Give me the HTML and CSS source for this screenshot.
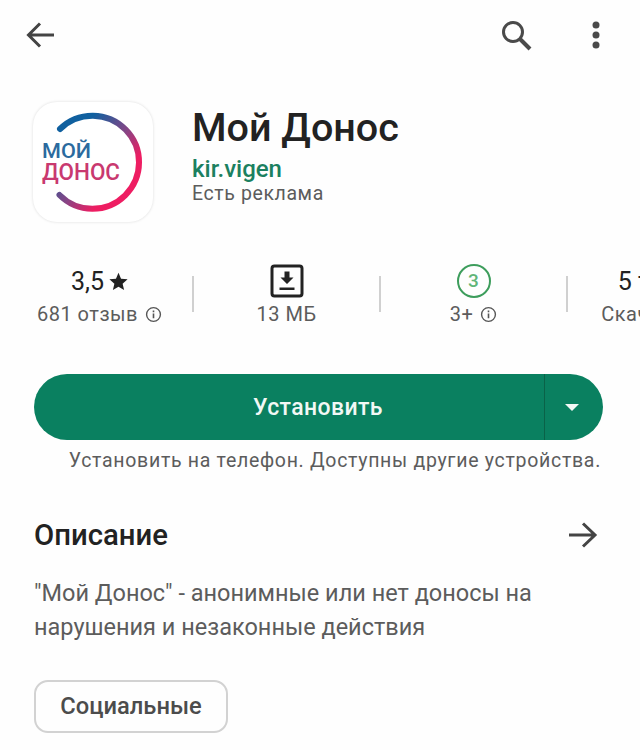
FILE: index.html
```html
<!DOCTYPE html>
<html lang="ru">
<head>
<meta charset="utf-8">
<title>Мой Донос</title>
<link rel="stylesheet" href="styles.css">
</head>
<body>
<div class="toolbar">
    <svg class="ico-back" width="32" height="32" viewBox="0 0 32 32"><path d="M29 16H4M15 4.500 3.500 16 15 27.500" fill="none" stroke="#444" stroke-width="3"/></svg>
    <div class="toolbar-right">
        <svg width="32" height="32" viewBox="0 0 32 32"><circle cx="13" cy="13" r="9.500" fill="none" stroke="#4a4a4a" stroke-width="3"/><path d="M20 20l10 10" stroke="#4a4a4a" stroke-width="4"/></svg>
        <svg width="8" height="28" viewBox="0 0 8 28"><circle cx="4" cy="4" r="3.500" fill="#4a4a4a"/><circle cx="4" cy="14" r="3.500" fill="#4a4a4a"/><circle cx="4" cy="24" r="3.500" fill="#4a4a4a"/></svg>
    </div>
</div>

<div class="app-head">
    <div class="app-icon">
        <svg width="120" height="120" viewBox="0 0 120 120">
            <defs>
                <linearGradient id="ring" x1="0.150" y1="0.100" x2="0.850" y2="0.800">
                    <stop offset="0.120" stop-color="#10609f"/>
                    <stop offset="0.550" stop-color="#8a4484"/>
                    <stop offset="0.850" stop-color="#ee1d62"/>
                </linearGradient>
            </defs>
            <path d="M27 27A46.500 46.500 0 1 1 26.500 93" fill="none" stroke="url(#ring)" stroke-width="6" stroke-linecap="round"/>
            <text class="logo-top" x="9" y="56" textLength="49" lengthAdjust="spacingAndGlyphs">МОЙ</text>
            <text class="logo-bottom" x="9" y="78" textLength="78" lengthAdjust="spacingAndGlyphs">ДОНОС</text>
        </svg>
    </div>
    <div class="app-info">
        <h1>Мой Донос</h1>
        <div class="dev">kir.vigen</div>
        <div class="ads">Есть реклама</div>
    </div>
</div>

<div class="stats">
    <div class="stat">
        <div class="stat-top">3,5 <svg width="19" height="19" viewBox="0 0 24 24"><path d="M12 1l3.200 7.600 8.300.7-6.300 5.400 1.900 8.100L12 18.500l-7.100 4.300 1.900-8.100L.5 9.300l8.300-.7z" fill="#222"/></svg></div>
        <div class="stat-sub">681 отзыв <svg class="info" width="17" height="17" viewBox="0 0 16 16"><circle cx="8" cy="8" r="6.500" fill="none" stroke="#555" stroke-width="1.300"/><path d="M8 7v4.500M8 4.300v1.500" stroke="#555" stroke-width="1.500"/></svg></div>
    </div>
    <div class="stat">
        <div class="stat-top"><svg width="34" height="34" viewBox="0 0 34 34"><rect x="2" y="2" width="30" height="30" rx="2.500" fill="none" stroke="#222" stroke-width="3"/><path d="M14.500 7.500h5v6h4L17 20l-6.500-6.500h4zM9.500 23.500h15v2.500h-15z" fill="#222"/></svg></div>
        <div class="stat-sub">13 МБ</div>
    </div>
    <div class="stat">
        <div class="stat-top"><span class="age">3</span></div>
        <div class="stat-sub">3+ <svg class="info" width="17" height="17" viewBox="0 0 16 16"><circle cx="8" cy="8" r="6.500" fill="none" stroke="#555" stroke-width="1.300"/><path d="M8 7v4.500M8 4.300v1.500" stroke="#555" stroke-width="1.500"/></svg></div>
    </div>
    <div class="stat">
        <div class="stat-top">5 тыс.+</div>
        <div class="stat-sub">Скачивания</div>
    </div>
</div>

<div class="install">
    <div class="install-main">Установить</div>
    <div class="install-more"><span class="caret"></span></div>
</div>
<div class="install-note">Установить на телефон. Доступны другие устройства.</div>

<div class="section-head">
    <h2>Описание</h2>
    <svg width="30" height="28" viewBox="0 0 30 28"><path d="M1 14h26M15 2.500 27 14 15 25.500" fill="none" stroke="#444" stroke-width="3"/></svg>
</div>
<p class="descr">"Мой Донос" - анонимные или нет доносы на нарушения и незаконные действия</p>
<div class="chip">Социальные</div>
</body>
</html>
```

FILE: styles.css
```css
html, body {
    height: 100%;
    overflow: hidden;
}

body {
    margin: 0;
    width: 640px;
    height: 750px;
    background-color: #fefefe;
    color: #222;
    font-family: Roboto, "Liberation Sans", sans-serif;
}

.toolbar {
    display: flex;
    justify-content: space-between;
    align-items: center;
    height: 32px;
    padding: 19px 40px 0 25px;
}

.toolbar-right {
    display: flex;
    align-items: center;
    gap: 60px;
}

.app-head {
    display: flex;
    gap: 39px;
    margin: 51px 0 0 33px;
}

.app-icon {
    width: 120px;
    height: 120px;
    border-radius: 24px;
    background-color: #fff;
    box-shadow: 0 0 3px rgba(0, 0, 0, 0.14);
}

.logo-top {
    font-size: 21px;
    font-weight: 500;
    fill: #2b6a9e;
}

.logo-bottom {
    font-size: 24px;
    font-weight: 500;
    fill: #c9396f;
}

.app-info {
    padding-top: 2px;
}

.app-info h1 {
    margin: 0;
    font-size: 39.500px;
    line-height: 48px;
    font-weight: 500;
    color: #222;
}

.dev {
    font-size: 24px;
    line-height: 28px;
    margin-top: 3px;
    font-weight: 500;
    color: #1b8060;
}

.ads {
    font-size: 19.500px;
    line-height: 24px;
    margin-top: -1px;
    letter-spacing: 0.6px;
    color: #5c5c5c;
}

.stats {
    display: flex;
    margin: 42px 0 0 6px;
    width: 800px;
}

.stat {
    flex: 0 0 187px;
    height: 64px;
    text-align: center;
    position: relative;
    white-space: nowrap;
}

.stat + .stat::before {
    content: "";
    position: absolute;
    left: -1px;
    top: 12px;
    width: 2px;
    height: 36px;
    background-color: #d0d0d0;
}

.stat-top {
    display: flex;
    justify-content: center;
    align-items: center;
    gap: 5px;
    height: 34px;
    font-size: 25px;
    font-weight: 400;
    color: #222;
}

.stat-sub {
    display: flex;
    justify-content: center;
    align-items: center;
    gap: 7px;
    margin-top: 4px;
    font-size: 20px;
    line-height: 24px;
    letter-spacing: 0.5px;
    color: #5c5c5c;
}

.age {
    box-sizing: border-box;
    width: 34px;
    height: 34px;
    border: 2.500px solid #3d9d5c;
    border-radius: 50%;
    text-align: center;
    font-size: 19px;
    line-height: 29px;
    font-weight: 500;
    color: #61b578;
}

.install {
    display: flex;
    width: 569px;
    height: 66px;
    margin: 46px 0 0 34px;
    border-radius: 33px;
    background-color: #0a8060;
    color: #fff;
}

.install-main {
    flex: 1;
    text-align: center;
    padding-left: 58px;
    font-size: 23px;
    line-height: 68px;
    font-weight: 500;
    letter-spacing: 0.4px;
    color: #f2f8f5;
}

.install-more {
    display: flex;
    justify-content: center;
    align-items: center;
    box-sizing: border-box;
    width: 59px;
    padding-right: 5px;
    border-left: 1px solid #0a6248;
}

.caret {
    border-left: 7px solid transparent;
    border-right: 7px solid transparent;
    border-top: 7px solid #f2f8f5;
}

.install-note {
    margin: 9px 39px 0 0;
    text-align: right;
    font-size: 19.500px;
    line-height: 24px;
    letter-spacing: 0.7px;
    color: #5c5c5c;
}

.section-head {
    display: flex;
    justify-content: space-between;
    align-items: center;
    margin: 42px 42px 0 34px;
    height: 40px;
}

.section-head h2 {
    margin: 0;
    font-size: 29.300px;
    font-weight: 500;
    color: #222;
}

.descr {
    width: 530px;
    margin: 22px 0 0 34px;
    font-size: 23.500px;
    line-height: 33.500px;
    color: #5c5c5c;
}

.chip {
    box-sizing: border-box;
    width: 194px;
    height: 53px;
    margin: 36px 0 0 34px;
    border: 2px solid #d2d2d2;
    border-radius: 14px;
    text-align: center;
    font-size: 23.700px;
    line-height: 49px;
    font-weight: 500;
    color: #4c4c4c;
}
```
